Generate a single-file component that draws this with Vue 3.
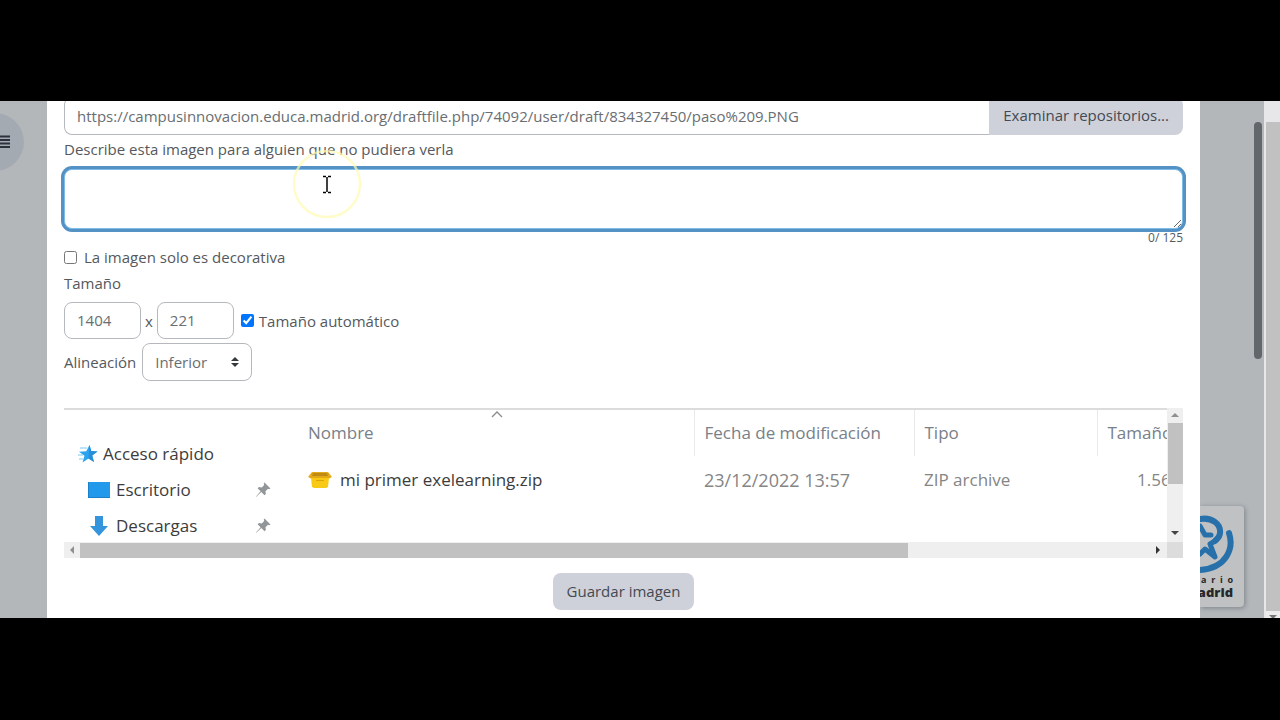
<script setup>
import { ref } from 'vue'

const url = ref('https://campusinnovacion.educa.madrid.org/draftfile.php/74092/user/draft/834327450/paso%209.PNG')
const description = ref('')
const decorative = ref(false)
const width = ref('1404')
const height = ref('221')
const autoSize = ref(true)
const alignment = ref('Inferior')
const pinned = [
  { name: 'Escritorio', icon: 'desktop' },
  { name: 'Descargas', icon: 'download' },
]
</script>

<template>
  <div class="stage">
    <aside class="backdrop left">
      <button class="menu" type="button" aria-label="Menú">
        <svg width="10" height="14" viewBox="0 0 10 14"><path d="M0 1.5H10M0 5H10M0 8.5H10M0 12H10" stroke="#2c313c" stroke-width="2" /></svg>
      </button>
    </aside>

    <main class="modal">
      <form @submit.prevent>
        <div class="url-row">
          <input v-model="url" class="field url" type="text" aria-label="URL">
          <button class="btn browse" type="button">Examinar repositorios...</button>
        </div>

        <label class="line" for="description">Describe esta imagen para alguien que no pudiera verla</label>
        <div class="description">
          <textarea id="description" v-model="description"></textarea>
          <svg class="pointer" width="70" height="70" viewBox="0 0 70 70" aria-hidden="true">
            <circle cx="35" cy="35" r="33" fill="none" stroke="#fffbb4" stroke-opacity=".7" stroke-width="2.5" />
            <path d="M31 27.5H34M36 27.5H39M31 43.5H34M36 43.5H39" fill="none" stroke="#000" stroke-width="1.3" />
            <path d="M35 28V43" stroke="#000" stroke-width="1.5" />
          </svg>
        </div>
        <div class="count">{{ description.length }}/ 125</div>

        <label class="check decorative"><input v-model="decorative" type="checkbox">La imagen solo es decorativa</label>
        <label class="line size-label" for="width">Tamaño</label>
        <div class="sizes">
          <input id="width" v-model="width" class="field size" type="text">
          <span>x</span>
          <input v-model="height" class="field size" type="text" aria-label="Altura">
          <label class="check auto"><input v-model="autoSize" type="checkbox">Tamaño automático</label>
        </div>
        <div class="align">
          <label for="alignment">Alineación</label>
          <div class="select">
            <select id="alignment" v-model="alignment" class="field"><option>Inferior</option></select>
            <svg width="8" height="10" viewBox="0 0 8 10" aria-hidden="true"><path d="M0 4L4 0L8 4ZM0 6H8L4 10Z" fill="#343a40" /></svg>
          </div>
        </div>

        <section class="preview">
          <div class="canvas">
            <nav class="places">
              <div class="place root">
                <svg width="20" height="20" viewBox="0 0 20 20">
                  <path d="M11.5 1L13.2 7L19.5 7.5L14.2 11.5L16 18L10.5 14.5L4.5 18.5L6.5 11.8L1 7.8L8.3 7.2Z" fill="#2ba3ee" />
                  <path d="M2 4H9M0 11H5M1 15H5" stroke="#7bc8f5" stroke-width="1" />
                  <path d="M11.5 1L13.2 7L19.5 7.5L14.2 11.5L16 18L10.5 14.5Z" fill="#278ed7" />
                </svg>
                Acceso rápido
              </div>
              <div v-for="place in pinned" :key="place.name" class="place">
                <svg v-if="place.icon === 'desktop'" width="24" height="20" viewBox="0 0 24 20"><rect x="1" y="2" width="22" height="16" fill="#2399ec" /><path d="M1 17.5H23M1.5 2V18" stroke="#1b7fc9" /></svg>
                <svg v-else width="24" height="20" viewBox="0 0 24 20"><path d="M8 0H16V10H21L12 20L3 10H8Z" fill="#3494dc" /></svg>
                <span>{{ place.name }}</span>
                <svg class="pin" width="16" height="16" viewBox="0 0 16 16"><path d="M9.5 0.5L15.5 6.5L14 7.2L13 6.8L10.5 9.3L10.8 12L9.5 13.2L6.3 10L1 15L0.8 14.8L5.6 9.3L2.6 6.3L4 5L6.8 5.4L9.2 3L8.8 1.3Z" fill="#929699" /></svg>
              </div>
            </nav>
            <table class="files">
              <thead>
                <tr>
                  <th class="name" scope="col">
                    Nombre
                    <svg class="sort" width="12" height="7" viewBox="0 0 12 7" aria-hidden="true"><path d="M1 6L6 1L11 6" fill="none" stroke="#8b8b8b" stroke-width="1.3" /></svg>
                  </th>
                  <th class="date" scope="col">Fecha de modificación</th>
                  <th class="kind" scope="col">Tipo</th>
                  <th class="bytes" scope="col">Tamaño</th>
                </tr>
              </thead>
              <tbody>
                <tr>
                  <td class="name">
                    <div class="file">
                      <svg width="24" height="18" viewBox="0 0 24 18"><path d="M4 1H20L24 6L20 8H4L0 6Z" fill="#e5aa13" /><path d="M5 2H19L20 5H4Z" fill="#bf8b17" /><path d="M3 7H21L20 16L18 17H6L4 16Z" fill="#f8c915" /><path d="M8 9.5H16" stroke="#dda409" /></svg>
                      mi primer exelearning.zip
                    </div>
                  </td>
                  <td class="date stamp">23/12/2022 13:57</td>
                  <td class="kind">ZIP archive</td>
                  <td class="bytes amount">1.56</td>
                </tr>
              </tbody>
            </table>
          </div>
          <div class="vbar">
            <svg width="8" height="4" viewBox="0 0 8 4"><path d="M0 4L4 0L8 4Z" fill="#8f8f8f" /></svg>
            <i></i>
            <svg class="end" width="8" height="4" viewBox="0 0 8 4"><path d="M0 0L4 4L8 0Z" fill="#444" /></svg>
          </div>
          <div class="hbar">
            <svg width="4" height="8" viewBox="0 0 4 8"><path d="M4 0L0 4L4 8Z" fill="#8f8f8f" /></svg>
            <i></i>
            <svg class="end" width="4" height="8" viewBox="0 0 4 8"><path d="M0 0L4 4L0 8Z" fill="#333" /></svg>
          </div>
          <div class="corner"></div>
        </section>

        <div class="actions"><button class="btn save" type="submit">Guardar imagen</button></div>
      </form>
    </main>

    <aside class="backdrop right">
      <div class="thumb"></div>
      <div class="card">
        <svg width="38" height="62" viewBox="0 0 38 62" aria-hidden="true">
          <g fill="none" stroke="#2770aa" stroke-linecap="round" stroke-linejoin="round">
            <path d="M0 5C12 3 21 10 20 19C20 23 17 25 15 27" stroke-width="6" />
            <path d="M0 12L5 21L11 21M15 27L10 30L15 43L5 35L0 40" stroke-width="5" />
            <path d="M29 19C34 34 27 54 0 56" stroke-width="6" />
          </g>
        </svg>
        <div class="spaced"><span>a</span><span>r</span><span>i</span><span>o</span></div>
        <strong>adrid</strong>
      </div>
    </aside>
    <div class="page-scroll"><svg width="8" height="3" viewBox="0 0 8 3"><path d="M0 0H8L5 3H3Z" fill="#777" /></svg></div>
  </div>
</template>

<style>
body { background: #000; }
</style>

<style scoped>
* { box-sizing: border-box; }
.stage {
  display: flex;
  margin: 101px 0;
  font: 15px/22px "Open Sans", "Noto Sans", sans-serif;
  color: #55595d;
  overflow: hidden;
}
input, textarea, select, button { font: inherit; color: inherit; margin: 0; }
.backdrop { background: #b3b7ba; flex: none; overflow: hidden; }
.left { width: 47px; }
.menu {
  display: flex; align-items: center; justify-content: flex-end;
  width: 58px; height: 58px; margin: 12px 0 0 -34px; padding: 0 14px 0 0;
  border: 0; border-radius: 50%; background: #a4aab1;
}
.modal { flex: 1; min-width: 0; background: #fff; padding: 0 17px 8px; overflow: hidden; }
.field { height: 37px; border: 1px solid #b5b8bc; border-radius: 8px; background: #fff; padding: 0 12px 1px; color: #6a6e72; }
.url-row { display: flex; margin-top: -4px; }
.url { flex: 1; min-width: 0; height: 38px; border-right: 0; border-radius: 8px 0 0 8px; }
.btn { border: 0; background: #ced1da; color: #444952; padding: 0 14px 2px; height: 37px; border-radius: 8px; }
.browse { height: 38px; border-radius: 0 8px 8px 0; }
.line { display: block; }
label.line { margin-top: 3px; }
.description { position: relative; margin-top: 9px; }
textarea {
  display: block; width: 100%; height: 60px; padding: 8px 12px; resize: vertical; outline: 0;
  border: 1px solid #7fbde8; border-radius: 8px; box-shadow: 0 0 0 3px #5492c5;
}
.pointer { position: absolute; left: 228px; top: -20px; pointer-events: none; }
.count { text-align: right; font-size: 12px; line-height: 16px; margin-top: 1px; }
.check { display: flex; align-items: center; gap: 8px; }
.check input { width: 13px; height: 13px; }
.decorative { gap: 7px; }
.auto { gap: 5px; margin-left: 3px; }
.size-label.line { margin-top: 4px; }
.sizes { display: flex; align-items: center; gap: 4px; margin-top: 8px; }
.size { width: 77px; }
.align { display: flex; align-items: center; gap: 6px; margin-top: 4px; }
.select { position: relative; }
.select select { width: 110px; height: 38px; appearance: none; }
.select svg { position: absolute; right: 13px; top: 14px; pointer-events: none; }
.preview {
  display: grid; grid-template: 134px 16px / minmax(0, 1fr) 16px; margin-top: 27px;
}
.canvas { display: flex; overflow: hidden; border-top: 2px solid #dcdcdc; font-size: 17px; line-height: 24px; color: #3c3c3c; }
.places { flex: none; width: 244px; padding: 26px 37px 0 14px; }
.place { display: flex; align-items: center; gap: 5px; height: 36px; padding-left: 9px; }
.place.root { padding-left: 0; }
.place svg { flex: none; }
.pin { margin-left: auto; }
.files { flex: none; width: 934px; height: 94px; table-layout: fixed; border-collapse: collapse; text-align: left; color: #858585; }
.files th { position: relative; font-weight: 400; height: 46px; padding: 0 0 0 10px; color: #788089; border-left: 1px solid #e9e9e9; }
.files td { height: 48px; padding: 0 0 0 10px; }
.files .name { width: 386px; padding-left: 0; border-left: 0; }
.files .date { width: 220px; }
.files .stamp { font-size: 18px; }
.files .kind { width: 183px; }
.files td.amount { padding-left: 40px; }
.sort { position: absolute; left: 183px; top: 1px; }
.file { display: flex; align-items: center; gap: 8px; color: #3c3c3c; }
.vbar, .hbar { display: flex; align-items: center; background: #efefef; }
.vbar { flex-direction: column; padding: 5px 0 7px; }
.vbar i { width: 15px; height: 61px; margin-top: 6px; background: #c1c1c1; }
.hbar { padding: 0 7px 0 6px; }
.hbar i { width: 76%; height: 15px; margin-left: 6px; background: #c1c1c1; }
.vbar .end { margin-top: auto; }
.hbar .end { margin-left: auto; }
.corner { background: #dcdcdc; }
.actions { display: flex; justify-content: center; margin-top: 15px; }
.right { display: flex; flex-direction: column; width: 64px; }
.thumb { align-self: flex-end; width: 8px; height: 237px; margin: 21px 2px 0 0; border-radius: 4px; background: #62676c; }
.card {
  width: 44px; height: 101px; margin: auto 0 11px; padding-top: 8px; overflow: hidden;
  background: #bfc1c3; border-radius: 0 4px 4px 0; box-shadow: 1px 1px 5px #7c8288; color: #252729;
}
.card svg { display: block; }
.spaced { display: flex; justify-content: space-between; width: 33px; padding-left: 1px; font-size: 9px; line-height: 8px; font-weight: 700; }
.card strong { display: flex; justify-content: flex-end; width: 33px; font-size: 13px; line-height: 16px; font-weight: 800; }
.page-scroll { display: flex; flex-direction: column; align-items: center; justify-content: flex-end; flex: none; width: 16px; border: solid #e7e7e9; border-width: 21px 0 0 2px; background: linear-gradient(#c1c1c1, #c1c1c1) top / 100% calc(100% - 7px) no-repeat #ececec; }
</style>
